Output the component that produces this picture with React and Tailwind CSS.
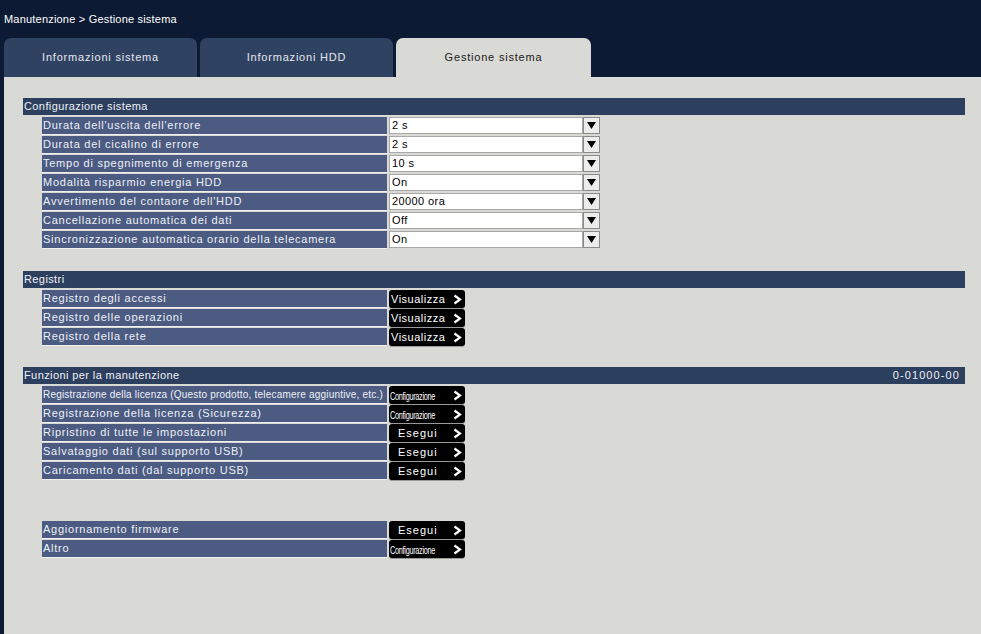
import React from 'react';

const configRows = [
  ['Durata dell\'uscita dell\'errore', '2 s'],
  ['Durata del cicalino di errore', '2 s'],
  ['Tempo di spegnimento di emergenza', '10 s'],
  ['Modalità risparmio energia HDD', 'On'],
  ['Avvertimento del contaore dell\'HDD', '20000 ora'],
  ['Cancellazione automatica dei dati', 'Off'],
  ['Sincronizzazione automatica orario della telecamera', 'On'],
];

const logRows = ['Registro degli accessi', 'Registro delle operazioni', 'Registro della rete'];

function Chevron() {
  return (
    <svg width="9" height="11" viewBox="0 0 9 11" className="shrink-0">
      <polyline points="1.5,1.5 7,5.5 1.5,9.5" fill="none" stroke="white" strokeWidth="2.2" />
    </svg>
  );
}

function ActionButton({ kind }) {
  return (
    <div className="w-[76px] h-[18px] bg-black rounded-[3px] flex items-center pr-[3px] text-white shadow-[0_1px_0_#9a9a9a]">
      {kind === 'view' && (
        <span className="flex-1 pl-[2px] text-[11px] tracking-[0.5px]">Visualizza</span>
      )}
      {kind === 'run' && (
        <span className="flex-1 pl-[9px] text-[11px] tracking-[1px]">Esegui</span>
      )}
      {kind === 'config' && (
        <span className="flex-1 pl-[1px] overflow-hidden">
          <span className="inline-block text-[11px] tracking-[-0.4px] origin-left scale-x-[0.66] whitespace-nowrap">Configurazione</span>
        </span>
      )}
      <Chevron />
    </div>
  );
}

function Dropdown({ value }) {
  return (
    <div className="w-[211px] h-[17px] flex">
      <div className="flex-1 bg-white border border-[#a8a8a8] text-black text-[11px] tracking-[0.4px] pl-[2px] leading-[15px]">{value}</div>
      <div className="w-[17px] h-[17px] bg-[#ececec] border border-[#8a8a8a] flex items-center justify-center">
        <svg width="9" height="7" viewBox="0 0 9 7">
          <polygon points="0,0 9,0 4.5,7" fill="black" />
        </svg>
      </div>
    </div>
  );
}

function Row({ label, children, small }) {
  return (
    <div className="flex items-start h-[17px] pl-[19px] gap-[2px]">
      <div className="w-[345px] h-[17px] bg-[#4b5b82] shadow-[0_1px_0_#f0f0f0] flex items-center pl-[1px] text-[#eef1f6] overflow-hidden whitespace-nowrap">
        {small ? (
          <span className="text-[10px] tracking-[0.2px]">{label}</span>
        ) : (
          <span className="text-[11px] tracking-[0.75px]">{label}</span>
        )}
      </div>
      {children}
    </div>
  );
}

function SectionHeader({ title, right }) {
  return (
    <div className="h-[17px] bg-[#2d3f5f] text-[#eef1f6] text-[11px] tracking-[0.4px] flex items-center justify-between pl-[1px] pr-[5px]">
      <span>{title}</span>
      {right && <span className="tracking-[1.1px]">{right}</span>}
    </div>
  );
}

export default function App() {
  return (
    <div className="w-[981px] h-[634px] bg-[#0c1b33] flex flex-col overflow-hidden font-['Liberation_Sans',Arial,sans-serif]">
      <div className="h-[38px] pl-[4px] pt-[11px] text-[11px] text-white tracking-[0.2px]">
        Manutenzione &gt; Gestione sistema
      </div>
      <div className="flex h-[39px] pl-[4px] gap-[3px]">
        <div className="w-[193px] bg-[#2f4262] rounded-t-[7px] flex items-center justify-center text-[11px] text-[#e4e8ef] tracking-[0.8px]">
          Informazioni sistema
        </div>
        <div className="w-[193px] bg-[#2f4262] rounded-t-[7px] flex items-center justify-center text-[11px] text-[#e4e8ef] tracking-[0.8px]">
          Informazioni HDD
        </div>
        <div className="w-[195px] bg-[#d9d9d5] rounded-t-[7px] flex items-center justify-center text-[11px] text-[#1a1a1a] tracking-[0.8px]">
          Gestione sistema
        </div>
      </div>
      <div className="flex-1 bg-[#d9d9d5] ml-[4px] pl-[19px] pr-[16px] pt-[21px]">
        <SectionHeader title="Configurazione sistema" />
        <div className="flex flex-col gap-[2px] mt-[2px]">
          {configRows.map(([label, value]) => (
            <Row key={label} label={label}>
              <Dropdown value={value} />
            </Row>
          ))}
        </div>

        <div className="mt-[23px]">
          <SectionHeader title="Registri" />
        </div>
        <div className="flex flex-col gap-[2px] mt-[2px]">
          {logRows.map((label) => (
            <Row key={label} label={label}>
              <ActionButton kind="view" />
            </Row>
          ))}
        </div>

        <div className="mt-[22px]">
          <SectionHeader title="Funzioni per la manutenzione" right="0-01000-00" />
        </div>
        <div className="flex flex-col gap-[2px] mt-[2px]">
          <Row label="Registrazione della licenza (Questo prodotto, telecamere aggiuntive, etc.)" small>
            <ActionButton kind="config" />
          </Row>
          <Row label="Registrazione della licenza (Sicurezza)">
            <ActionButton kind="config" />
          </Row>
          <Row label="Ripristino di tutte le impostazioni">
            <ActionButton kind="run" />
          </Row>
          <Row label="Salvataggio dati (sul supporto USB)">
            <ActionButton kind="run" />
          </Row>
          <Row label="Caricamento dati (dal supporto USB)">
            <ActionButton kind="run" />
          </Row>
        </div>
        <div className="flex flex-col gap-[2px] mt-[42px]">
          <Row label="Aggiornamento firmware">
            <ActionButton kind="run" />
          </Row>
          <Row label="Altro">
            <ActionButton kind="config" />
          </Row>
        </div>
      </div>
    </div>
  );
}
